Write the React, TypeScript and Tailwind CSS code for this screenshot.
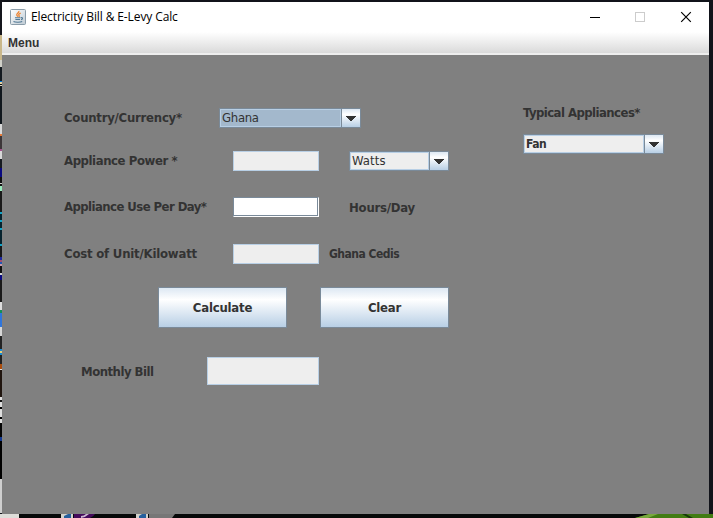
import React from "react";

const tahoma = "font-['DejaVu_Sans_Condensed','DejaVu_Sans',sans-serif] [font-stretch:condensed] text-[#333333] whitespace-nowrap leading-none";

function Label({ children, className = "" }: { children: React.ReactNode; className?: string }) {
  return <span className={`${tahoma} font-bold text-[13px] ${className}`}>{children}</span>;
}

function Field({ className = "" }: { className?: string }) {
  return <div className={`shrink-0 border border-[#b8cfe5] bg-[#eeeeee] ${className}`} />;
}

function Combo({ children, selected = false, className = "" }: { children: React.ReactNode; selected?: boolean; className?: string }) {
  return (
    <div className={`flex h-5 shrink-0 border border-[#7a8a99] ${className}`}>
      <div className={`flex min-w-0 flex-1 items-center border border-[#b8cfe5] pl-px ${selected ? "bg-[#a3b8cc]" : "bg-[#eeeeee]"}`}>{children}</div>
      <div className="flex w-[19px] items-center justify-center border-l border-[#7a8a99] bg-linear-to-b from-[#dde8f3] via-white via-30% to-[#b8cfe5]">
        <svg width="10" height="5" viewBox="0 0 10 5" shapeRendering="crispEdges"><path d="M0 0h10v1H9v1H8v1H7v1H6v1H4V4H3V3H2V2H1V1H0z" fill="#333" /></svg>
      </div>
    </div>
  );
}

function Button({ children }: { children: React.ReactNode }) {
  return (
    <button className={`${tahoma} flex h-[41px] w-[129px] items-center justify-center border border-[#7a8a99] bg-linear-to-b from-[#dde8f3] via-white via-30% to-[#b8cfe5] text-[13px] font-bold tracking-[-0.2px]`}>
      {children}
    </button>
  );
}

const strip: [number, string][] = [
  [35, "#15161d"], [25, "#c9b78a"], [7, "#d0d0c8"], [14, "#141a20"], [1, "#0078d7"], [2, "#e6d3a0"], [1, "#111"], [1, "#e0d9c5"], [38, "#10171d"],
  [10, "#d8d8d8"], [2, "#e77a36"], [13, "#3c3638"], [2, "#a0508b"], [8, "#d8d8d8"], [9, "#171b20"], [9, "#090980"], [6, "#111"], [1, "#ccc"], [2, "#111"], [5, "#98ebbd"],
  [21, "#191919"], [2, "#12a5c9"], [6, "#06232e"], [2, "#12a5c9"], [6, "#06232e"], [2, "#12a5c9"], [14, "#06232e"], [2, "#12a5c9"], [11, "#181818"], [3, "#1d27a0"], [2, "#a24d73"], [2, "#2357b6"],
  [2, "#c99bab"], [7, "#111"], [2, "#d7d7d7"], [5, "#090980"], [22, "#191919"], [8, "#ddd"], [3, "#129057"], [14, "#2f75dc"], [9, "#d6d6d6"], [13, "#222"], [2, "#178bd5"], [2, "#e7d078"], [2, "#178bd5"],
  [9, "#222"], [5, "#ad4d0b"], [1, "#ddd"], [27, "#20150f"], [3, "#ddd"], [2, "#111"], [5, "#ddd"], [2, "#000"], [8, "#ddd"], [2, "#000"], [4, "#ddd"], [14, "#050505"], [4, "#143a91"], [38, "#000"], [34, "#cfcfcf"],
];

function JavaIcon() {
  return (
    <svg width="16" height="16" viewBox="0 0 16 16">
      <defs><linearGradient id="tile" x1="0" y1="0" x2="1" y2="1"><stop stopColor="#fff" /><stop offset="1" stopColor="#bfcbd4" /></linearGradient></defs>
      <rect x=".5" y=".5" width="15" height="15" rx="1" fill="url(#tile)" stroke="#8a9ca9" />
      <path d="M8.8 2c1 1.7-2.7 2.4-2 4.1.2.6.8 1 1 1.6M10.7 4.1c-2.1.8-2.4 1.5-1.6 2.5.5.6.2 1-.2 1.5" fill="none" stroke="#ed8431" strokeWidth="1.3" />
      <path d="M5 8.7h5.5M5.4 10.5h4.6M11 8.6c2.2-.4 1.8 1.7 0 2M3.5 12.5c1.6 1 7 1 8.7 0" fill="none" stroke="#527995" strokeWidth="1.1" />
    </svg>
  );
}

function Desktop() {
  return (
    <div className="absolute inset-0 overflow-hidden bg-[#11131a]">
      <div className="flex h-full w-1 flex-col">
        {strip.map(([h, c], i) => <div key={i} className="w-full shrink-0" style={{ height: h, backgroundColor: c }} />)}
      </div>
      <svg className="absolute bottom-0 left-0" width="713" height="4" viewBox="0 0 713 4">
        <rect width="713" height="4" fill="#070909" />
        <rect width="19" height="4" fill="#deddd9" />
        <rect x="61" width="12" height="4" fill="#d2d2cc" /><path d="M64 4V2l4-2h3v4z" fill="#255f9d" />
        <path d="M74 0h21q-1 2-5 4H74z" fill="#440a5b" /><path d="M81 4q5-1 8-4h-3q-2 2-5 2z" fill="#cbb6d1" />
        <rect x="136" width="12" height="4" fill="#d2d2cc" /><path d="M139 4V2l3-2h4v4z" fill="#255f9d" />
        <path d="M149 0h26l-3 4h-23z" fill="#777" />
        <path d="M635 4l14-4h64v4z" fill="#427c13" /><path d="M635 4l14-4h9l-10 4z" fill="#78a83d" /><path d="M682 0l7 4h4l-7-4z" fill="#163909" />
      </svg>
    </div>
  );
}

export default function App() {
  return (
    <div className="relative h-[518px] w-[713px] overflow-hidden pl-0.5 pt-0.5">
      <Desktop />
      <main className="relative flex h-[512px] w-[707px] flex-col bg-[#808080]">
        <header className="flex h-[30px] shrink-0 items-center bg-white pl-2">
          <JavaIcon />
          <span className="ml-[5px] whitespace-nowrap font-['Open_Sans',sans-serif] text-[12px] leading-none tracking-[-0.11px] text-black">Electricity Bill &amp; E-Levy Calc</span>
          <div className="ml-auto flex items-center pr-[17px]">
            <svg width="102" height="12" viewBox="0 0 102 12">
              <path d="M0 6.5h10" stroke="#000" />
              <rect x="45.5" y="1.5" width="9" height="9" fill="none" stroke="#ccc" />
              <path d="M91.2 1.2l9.6 9.6M100.8 1.2l-9.6 9.6" stroke="#000" strokeWidth="1.2" />
            </svg>
          </div>
        </header>
        <nav className="flex h-[23px] shrink-0 items-center border-b-2 border-[#eeeeee] bg-linear-to-b from-white to-[#dadada] pl-1.5">
          <span className="font-['Liberation_Sans',sans-serif] text-[12px] font-bold leading-none text-[#333]">Menu</span>
        </nav>
        <div className="flex items-start">
          <section className="flex w-[521px] flex-col pt-[53px]">
            <div className="flex h-5 items-center pl-[62px]">
              <Label className="w-[155px] pb-0.5 tracking-[-0.24px]">Country/Currency*</Label>
              <Combo selected className="w-[142px]"><span className={`${tahoma} pb-0.5 text-[13px] tracking-[-0.3px]`}>Ghana</span></Combo>
            </div>
            <div className="mt-[23px] flex h-5 items-center pl-[62px]">
              <Label className="w-[169px] pb-0.5 tracking-[-0.42px]">Appliance Power *</Label>
              <Field className="h-5 w-[86px]" />
              <Combo className="ml-[30px] w-[100px]"><span className={`${tahoma} pb-0.5 text-[13px] tracking-[0.1px]`}>Watts</span></Combo>
            </div>
            <div className="mt-[26px] flex h-5 items-center pl-[62px]">
              <Label className="w-[169px] pb-0.5 tracking-[-0.56px]">Appliance Use Per Day*</Label>
              <div className="h-5 w-[86px] border border-b-white border-l-[#7a8a99] border-r-white border-t-[#7a8a99] bg-white"><div className="h-full border-b border-r border-[#7a8a99]" /></div>
              <Label className="ml-[30px] tracking-[-0.22px]">Hours/Day</Label>
            </div>
            <div className="mt-[27px] flex h-5 items-center pl-[62px]">
              <Label className="w-[169px] pb-0.5 tracking-[-0.2px]">Cost of Unit/Kilowatt</Label>
              <Field className="h-5 w-[86px]" />
              <span className={`${tahoma} ml-2.5 text-[12px] font-bold tracking-[-0.5px]`}>Ghana Cedis</span>
            </div>
            <div className="mt-[23px] flex gap-[33px] pl-[156px]"><Button>Calculate</Button><Button>Clear</Button></div>
            <div className="mt-[29px] flex items-center pl-[79px]"><Label className="w-[126px] tracking-[-0.5px]">Monthly Bill</Label><Field className="h-[28px] w-[112px]" /></div>
          </section>
          <aside className="flex flex-col pt-[51px]">
            <Label className="tracking-[-0.55px]">Typical Appliances*</Label>
            <Combo className="mt-[15px] w-[141px]"><span className={`${tahoma} text-[12px] font-bold tracking-[-0.5px]`}>Fan</span></Combo>
          </aside>
        </div>
      </main>
    </div>
  );
}
